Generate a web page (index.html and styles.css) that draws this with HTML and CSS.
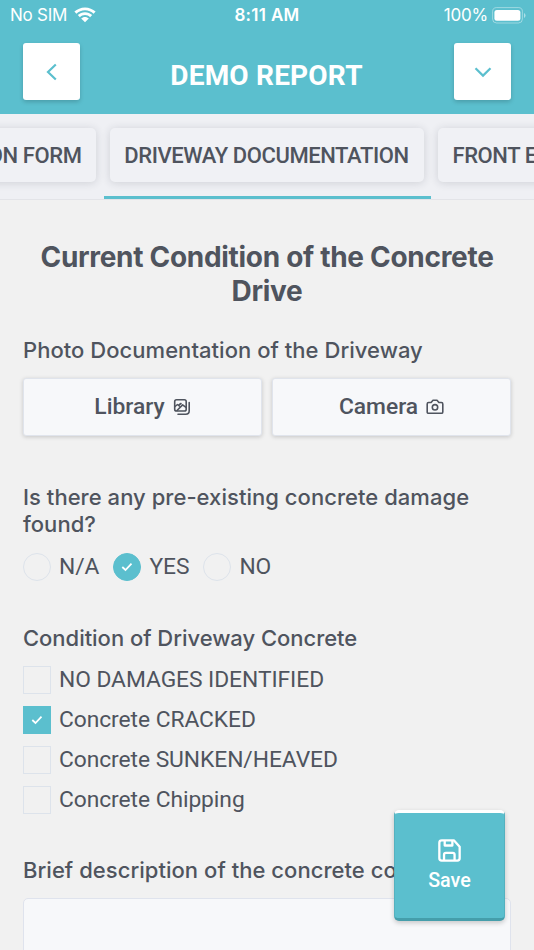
FILE: index.html
```html
<!DOCTYPE html>
<html lang="en">
<head>
<meta charset="utf-8">
<title>Demo Report</title>
<link rel="stylesheet" href="styles.css">
</head>
<body>
<div class="screen">
  <header class="header">
    <div class="status">
      <div class="carrier"><span>No SIM</span>
        <svg class="wifi" viewBox="0 0 22 16" width="22" height="16" fill="#fff"><path d="M11 0.4C6.9.4 3.1 2 .4 4.6l2 2.1C4.600 4.600 7.700 3.300 11 3.300s6.400 1.300 8.600 3.400l2-2.100C18.900 2 15.100.4 11 .4z"/><path d="M11 5.200c-2.800 0-5.300 1.100-7.200 2.900l2.100 2.100C7.200 8.900 9 8.100 11 8.100s3.800.8 5.100 2.100l2.100-2.100C16.300 6.300 13.800 5.200 11 5.200z"/><path d="M11 10c-1.500 0-2.800.6-3.800 1.500L11 15.300l3.800-3.800C13.800 10.600 12.500 10 11 10z"/></svg>
      </div>
      <div class="clock">8:11 AM</div>
      <div class="power"><span>100%</span>
        <svg class="battery" viewBox="0 0 34 17" width="34" height="17"><rect x=".6" y=".6" width="29.800" height="15.400" rx="4" fill="none" stroke="#fff" stroke-opacity=".4"/><rect x="2.400" y="2.900" width="26" height="10.800" rx="2.500" fill="#fff"/><path d="M32 6v5q1.500-.7 1.500-2.500T32 6z" fill="#fff" fill-opacity=".5"/></svg>
      </div>
    </div>
    <div class="titlebar">
      <button class="square"><svg viewBox="0 0 24 24" width="24" height="24"><path d="M15.800 4.500 8 12l7.800 7.500"/></svg></button>
      <h1 class="title">DEMO REPORT</h1>
      <button class="square"><svg viewBox="0 0 24 24" width="24" height="24"><path d="M4.500 8.300 12 15.600l7.500-7.300"/></svg></button>
    </div>
  </header>
  <nav class="tabs">
    <div class="tab prev"><div class="pill"><span>INSPECTION FORM</span></div></div>
    <div class="tab active"><div class="pill"><span class="tabtext">DRIVEWAY DOCUMENTATION</span></div></div>
    <div class="tab next"><div class="pill"><span>FRONT ENTRY</span></div></div>
  </nav>
  <main class="content">
    <h2 class="heading">Current Condition of the Concrete<br>Drive</h2>
    <section class="field photos">
      <div class="label photo-label">Photo Documentation of the Driveway</div>
      <div class="buttons">
        <button class="action"><span>Library</span>
          <svg viewBox="0 0 18 18" width="18" height="18"><rect x="1.700" y="1.700" width="11.500" height="11.300" rx="1.800"/><path d="m2 8.500 2.500-2 1.800 1.500M4 12.500l5.600-5.600 3.400 2.500M6.500 6.500l1.500-1M16.200 4.500v8.200q0 3.500-3.500 3.500H5"/></svg>
        </button>
        <button class="action"><span>Camera</span>
          <svg viewBox="0 0 18 18" width="18" height="18"><path d="M2.600 4.500h2.500L7 2.200h4l1.900 2.300h2.500q1.400 0 1.400 1.400v8q0 1.400-1.400 1.400H2.600q-1.400 0-1.400-1.400v-8q0-1.400 1.400-1.400z"/><circle cx="9" cy="9.300" r="2.700"/></svg>
        </button>
      </div>
    </section>
    <section class="field damage">
      <div class="label damage-label">Is there any pre-existing concrete damage<br>found?</div>
      <div class="radios">
        <label class="choice"><i class="box round"></i><span>N/A</span></label>
        <label class="choice"><i class="box round on"><svg viewBox="0 0 12 10" width="12" height="10"><path d="m1.300 5 3.200 3 6-6.300"/></svg></i><span>YES</span></label>
        <label class="choice"><i class="box round"></i><span>NO</span></label>
      </div>
    </section>
    <section class="field condition">
      <div class="label condition-label">Condition of Driveway Concrete</div>
      <div class="checks">
        <label class="choice"><i class="box"></i><span>NO DAMAGES IDENTIFIED</span></label>
        <label class="choice"><i class="box on"><svg viewBox="0 0 12 10" width="12" height="10"><path d="m1.300 5 3.200 3 6-6.300"/></svg></i><span>Concrete CRACKED</span></label>
        <label class="choice"><i class="box"></i><span>Concrete SUNKEN/HEAVED</span></label>
        <label class="choice"><i class="box"></i><span>Concrete Chipping</span></label>
      </div>
    </section>
    <section class="field">
      <div class="label brief-label">Brief description of the concrete co</div>
      <div class="textarea"></div>
    </section>
  </main>
  <button class="save">
    <svg viewBox="0 0 24 24" width="23" height="23"><path d="M4 1.400h12.500L22.600 8v12.200q0 2.400-2.400 2.400H3.800q-2.400 0-2.400-2.400V3.800Q1.400 1.400 4 1.400z"/><path d="M7 1.600v5.200h8V1.600M6.300 22.400v-6q0-1.900 1.900-1.900h7.200q1.900 0 1.900 1.900v6"/></svg>
    <span>Save</span>
  </button>
</div>
</body>
</html>
```
FILE: styles.css
```css
* { box-sizing: border-box; }
body { margin: 0; background: #f1f1f1; }
button { font: inherit; border: 0; padding: 0; margin: 0; }
h1, h2 { margin: 0; }
.screen {
  position: relative;
  width: 534px;
  height: 950px;
  overflow: hidden;
  background: #f1f1f1;
  color: #4f545e;
  font-family: Roboto, sans-serif;
}
.header { height: 114px; background: #5bbfce; color: #fff; }
.status {
  display: grid;
  grid-template-columns: 1fr auto 1fr;
  align-items: center;
  height: 30px;
  padding: 0 8px 0 10px;
  font-family: Inter, sans-serif;
  font-size: 17px;
}
.carrier, .power { display: flex; align-items: center; }
.carrier { gap: 7px; font-weight: 400; letter-spacing: -.25px; }
.power { justify-content: flex-end; gap: 4px; font-weight: 400; letter-spacing: -.2px; }
.clock { margin-right: 2px; font-weight: 600; letter-spacing: .3px; }
.titlebar {
  display: flex;
  align-items: center;
  justify-content: space-between;
  height: 57px;
  margin-top: 13px;
  padding: 0 23px;
}
.square {
  display: flex;
  align-items: center;
  justify-content: center;
  width: 57px;
  height: 57px;
  border-radius: 3px;
  background: #fff;
  box-shadow: 0 2px 4px rgba(0, 0, 0, .18);
}
.square svg { fill: none; stroke: #5bbfce; stroke-width: 2.2; }
.title { padding: 9px 1px 0 0; font-size: 28px; font-weight: 700; line-height: 34px; letter-spacing: .2px; }
.tabs {
  display: flex;
  justify-content: center;
  width: 534px;
  height: 86px;
  overflow: hidden;
  background: #eff0f4;
  border-bottom: 1px solid #e3e4e8;
}
.tab { flex: none; padding: 14px 7px 0 6px; }
.tab.active { width: 327px; border-bottom: 3px solid #5bbfce; }
.tab.prev, .tab.next { width: 250px; }
.tab.prev { padding-right: 8px; }
.tab.next { padding-left: 7px; }
.pill {
  display: flex;
  align-items: center;
  justify-content: center;
  height: 54px;
  padding: 0 14px;
  border-radius: 5px;
  background: #f0f1f5;
  box-shadow: 0 1px 9px rgba(40, 44, 60, .16);
  font-size: 22px;
  font-weight: 500;
  letter-spacing: -.42px;
  white-space: nowrap;
}
.prev .pill { justify-content: flex-end; }
.next .pill { justify-content: flex-start; padding-left: 15px; }
.content { padding: 41px 23px 0; }
.heading {
  font-family: Inter, sans-serif;
  font-size: 28px;
  font-weight: 700;
  line-height: 33.5px;
  letter-spacing: -.3px;
  text-align: center;
  white-space: nowrap;
}
.label {
  font-family: Inter, sans-serif;
  font-size: 22px;
  font-weight: 450;
  line-height: 27px;
  letter-spacing: .04px;
  white-space: nowrap;
}
.condition-label { letter-spacing: -.03px; }
.photos { margin-top: 29px; }
.buttons { display: grid; grid-template-columns: 1fr 1fr; gap: 10px; margin-top: 14px; }
.action {
  display: flex;
  align-items: center;
  justify-content: center;
  gap: 8px;
  height: 58px;
  border: 1.5px solid #e0e4ec;
  border-radius: 3px;
  background: #f7f8fa;
  box-shadow: 0 1px 4px rgba(0, 0, 0, .18);
  color: #4f545e;
  font-size: 22.8px;
  font-weight: 500;
}
.action span { padding-bottom: 2px; }
.action svg { fill: none; stroke: #4f545e; stroke-width: 1.6; stroke-linecap: round; stroke-linejoin: round; }
.damage { margin-top: 48px; }
.radios { display: flex; gap: 14px; margin-top: 15px; }
.choice { display: flex; align-items: center; gap: 8px; font-size: 22.8px; line-height: 28px; letter-spacing: -.06px; white-space: nowrap; }
.box {
  display: flex;
  align-items: center;
  justify-content: center;
  flex: none;
  width: 28px;
  height: 28px;
  border: 1.5px solid #dde3eb;
}
.box.round { border-radius: 50%; }
.box.on { border-color: #5bbfce; background: #5bbfce; }
.box svg { fill: none; stroke: #fff; stroke-width: 1.8; }
.condition { margin-top: 44px; }
.checks { display: flex; flex-direction: column; gap: 12px; margin-top: 14px; }
.condition + .field { margin-top: 43px; }
.textarea { height: 120px; margin-top: 14px; border: 1.5px solid #dfe3ed; border-radius: 5px; background: #f7f8fa; }
.save {
  position: absolute;
  left: 394px;
  top: 810px;
  display: flex;
  flex-direction: column;
  align-items: center;
  justify-content: center;
  gap: 7px;
  width: 111px;
  height: 111px;
  padding-bottom: 1px;
  border-top: 3px solid #fff;
  border-bottom: 3px solid #459eab;
  border-left: 1px solid #54b1bf;
  border-right: 1px solid #54b1bf;
  border-radius: 5px;
  background: #5bbfce;
  box-shadow: 0 2px 5px rgba(0, 0, 0, .2);
  color: #fff;
  font-size: 19.7px;
  font-weight: 500;
}
.save svg { fill: none; stroke: #fff; stroke-width: 2.4; stroke-linejoin: round; }
```
